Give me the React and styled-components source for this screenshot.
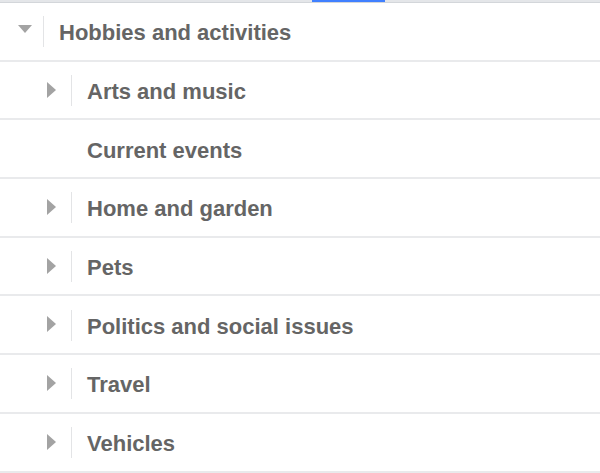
import React from "react";
import styled, { createGlobalStyle } from "styled-components";

const GlobalStyle = createGlobalStyle`
  html, body {
    margin: 0;
    padding: 0;
    background: #fff;
  }
  body {
    font-family: "Liberation Sans", Arial, Helvetica, sans-serif;
  }
`;

const items = [
  { label: "Hobbies and activities", level: 0, toggle: "open" },
  { label: "Arts and music", level: 1, toggle: "closed" },
  { label: "Current events", level: 1, toggle: null },
  { label: "Home and garden", level: 1, toggle: "closed" },
  { label: "Pets", level: 1, toggle: "closed" },
  { label: "Politics and social issues", level: 1, toggle: "closed" },
  { label: "Travel", level: 1, toggle: "closed" },
  { label: "Vehicles", level: 1, toggle: "closed" },
];

const Page = styled.div`
  width: 600px;
  background: #fff;
`;

const TabStrip = styled.div`
  position: relative;
  height: 2px;
  background: #e4e6e9;
  border-bottom: 1px solid #d3d6da;
`;

const ActiveTab = styled.div`
  position: absolute;
  left: 312px;
  top: 0;
  width: 73px;
  height: 2px;
  background: #4080ff;
`;

const List = styled.ul`
  list-style: none;
  margin: 0;
  padding: 0;
`;

const Row = styled.li`
  box-sizing: border-box;
  height: 58.7px;
  display: flex;
  align-items: center;
  padding-left: ${(p) => 18 + p.$level * 28}px;
  border-bottom: 2px solid #e9eaec;
`;

const Toggle = styled.div`
  box-sizing: border-box;
  width: 26px;
  height: 31px;
  margin-top: 1px;
  display: flex;
  align-items: center;
  border-right: 1px solid ${(p) => (p.$hidden ? "transparent" : "#e3e4e6")};
`;

const CaretDown = styled.span`
  width: 0;
  height: 0;
  margin-top: -5px;
  border-left: 7.5px solid transparent;
  border-right: 7.5px solid transparent;
  border-top: 8px solid #a3a3a3;
`;

const CaretRight = styled.span`
  width: 0;
  height: 0;
  margin-top: -2px;
  margin-left: 1px;
  border-top: 8px solid transparent;
  border-bottom: 8px solid transparent;
  border-left: 9px solid #a3a3a3;
`;

const Label = styled.span`
  margin-left: 15px;
  padding-top: 4px;
  font-size: 22px;
  font-weight: bold;
  color: #656565;
  white-space: nowrap;
`;

const TreeRow = ({ item }) => (
  <Row $level={item.level}>
    <Toggle $hidden={!item.toggle}>
      {item.toggle === "open" && <CaretDown />}
      {item.toggle === "closed" && <CaretRight />}
    </Toggle>
    <Label>{item.label}</Label>
  </Row>
);

export default function App() {
  return (
    <Page>
      <GlobalStyle />
      <TabStrip>
        <ActiveTab />
      </TabStrip>
      <List>
        {items.map((item) => (
          <TreeRow key={item.label} item={item} />
        ))}
      </List>
    </Page>
  );
}
